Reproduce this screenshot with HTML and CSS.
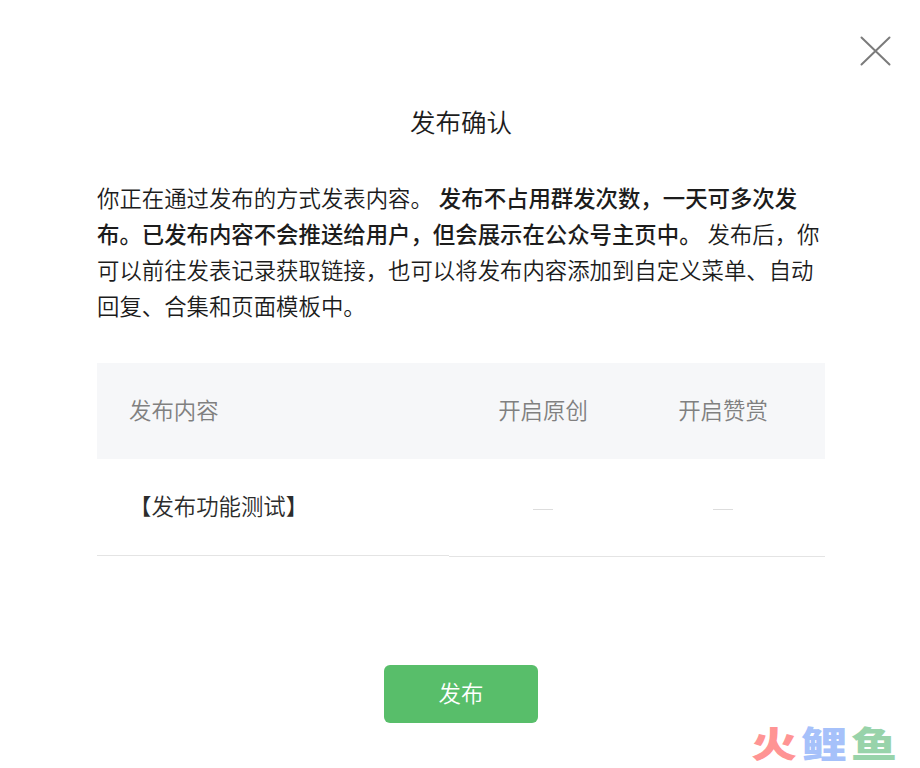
FILE: index.html
```html
<!DOCTYPE html>
<html lang="zh-CN">
<head>
<meta charset="utf-8">
<title>发布确认</title>
<link rel="stylesheet" href="styles.css">
</head>
<body>
<main class="dialog">
  <button class="close" aria-label="关闭"><svg viewBox="0 0 31 30" width="31" height="30"><path d="M1.5 1.5L29.5 28.5M29.5 1.5L1.5 28.5"/></svg></button>
  <h1 class="title">发布确认</h1>
  <p class="desc"><span class="line">你正在通过发布的方式发表内容。 <b>发布不占用群发次数，一天可多次发</b></span><span class="line"><b>布。已发布内容不会推送给用户，但会展示在公众号主页中。</b> 发布后，你</span><span class="line">可以前往发表记录获取链接，也可以将发布内容添加到自定义菜单、自动</span><span class="line">回复、合集和页面模板中。</span></p>
  <div class="table">
    <div class="row head"><span>发布内容</span><span class="mid">开启原创</span><span class="mid">开启赞赏</span></div>
    <div class="row item"><span class="name">【发布功能测试】</span><i class="dash"></i><i class="dash"></i></div>
    <div class="rule"><i class="rule-left"></i><i class="rule-right"></i></div>
  </div>
  <button class="publish">发布</button>
  <div class="mark"><span class="red">火</span><span class="blue">鲤</span><span class="green">鱼</span></div>
</main>
</body>
</html>
```
FILE: styles.css
```css
* { box-sizing: border-box; }
body { margin: 0; background: #fff; color: #1c1c1c; font-family: "Noto Sans CJK SC", sans-serif; font-weight: 350; }
button { border: 0; padding: 0; font: inherit; }
.dialog { position: relative; height: 768px; padding: 101px 95px 0 97px; }
.close { position: absolute; left: 860px; top: 36px; width: 31px; height: 30px; background: none; }
.close svg { display: block; fill: none; stroke: #7b7b7b; stroke-width: 2; stroke-linecap: round; }
.title { margin: 0; font-size: 25.5px; line-height: 40px; font-weight: 350; text-align: center; }
.desc { margin: 38px 0 0; font-size: 22.4px; line-height: 36px; white-space: nowrap; word-spacing: 1px; }
.line { display: block; }
.desc b { font-weight: 500; }
.table { margin-top: 40px; font-size: 22.4px; }
.row { display: grid; grid-template-columns: 356px 180px 180px 12px; height: 96px; align-items: center; }
.head { background: #f6f7f9; color: #808080; }
.row > span { padding-bottom: 4px; }
.row > :first-child { padding-left: 32px; }
.item { color: #2c2c2c; }
.mid { text-align: center; }
.dash { justify-self: center; width: 20px; height: 1px; margin-top: 5px; background: #ddd; }
.rule { display: flex; height: 2px; }
.rule-left { width: 352px; height: 1px; background: #e4e4e4; }
.rule-right { flex: 1; height: 1px; margin-top: 1px; background: #e4e4e4; }
.publish { display: block; width: 154px; height: 58px; margin: 108px auto 0; padding-bottom: 5px; border-radius: 6px; background: #58be6a; color: #fff; font-size: 22.4px; }
.mark { position: absolute; left: 751px; top: 708px; height: 68px; font-size: 46px; line-height: 68px; font-weight: 900; display: flex; gap: 4px; transform: scaleY(.78); }
.red { color: #ff9494; }
.blue { color: #a6c1fa; }
.green { color: #98d3aa; }
```
